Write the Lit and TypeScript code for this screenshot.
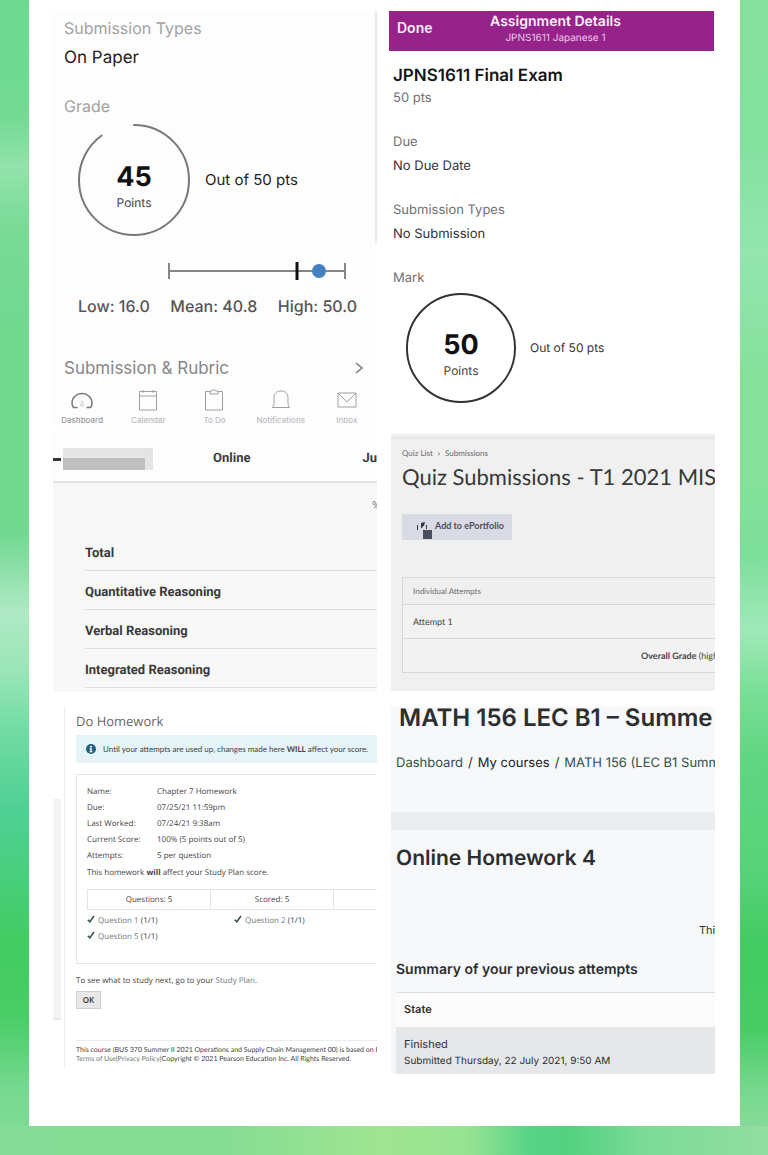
import { LitElement, html, css, svg } from "lit";
import { customElement, property } from "lit/decorators.js";

/** Circular score dial; the arc covers score / total of the circle. */
@customElement("score-ring")
class ScoreRing extends LitElement {
  @property({ type: Number }) score = 0;
  @property({ type: Number }) total = 50;

  static styles = css`
    :host { display: grid; color: #75797c; }
    .arc, .label { grid-area: 1 / 1; }
    .arc { width: 100%; height: 100%; display: block; }
    .label {
      display: flex; flex-direction: column; align-items: center; justify-content: center;
      padding-top: 16px; color: #111;
    }
    .score { font-size: 27px; line-height: 30px; font-weight: 700; }
    .unit { font-size: 12px; line-height: 22px; color: #444; }
  `;

  render() {
    const share = (this.score / this.total) * 100;
    return html`
      <svg class="arc" viewBox="0 0 114 114" aria-hidden="true">
        <circle cx="57" cy="57" r="55" fill="none" stroke="currentColor" stroke-width="2"
          stroke-linecap="round" pathLength="100"
          stroke-dasharray=${share >= 100 ? "none" : `${share} 100`} transform="rotate(-90 57 57)"></circle>
      </svg>
      <div class="label"><span class="score">${this.score}</span><span class="unit">Points</span></div>
    `;
  }
}

@customElement("grade-panel")
class GradePanel extends LitElement {
  static styles = css`
    :host { display: block; background: #fdfdfd; font-family: Inter, "Noto Sans", sans-serif; color: #222; }
    .details { border-right: 2px solid #ebebed; padding: 5px 0 6px 11px; }
    .term { margin: 0; font-size: 16px; line-height: 24px; font-weight: 400; color: #a2a2a4; }
    .value { margin: 2px 0 0; font-size: 17px; line-height: 32px; }
    .grade { margin-top: 20px; }
    .score-row { display: flex; align-items: center; gap: 14px; padding: 5px 0 0 13px; }
    .ring { width: 114px; height: 114px; }
    .outof { font-size: 15px; line-height: 20px; }
    .range { display: block; width: 180px; height: 18px; margin: 19px 30px 0 auto; }
    .stats {
      display: flex; justify-content: space-between; padding: 0 20px 0 25px; margin-top: 14px;
      font-size: 16px; line-height: 24px; font-weight: 500; color: #555;
    }
    .rubric {
      display: flex; justify-content: space-between; align-items: center; width: 100%;
      margin: 38px 0 0; padding: 0 13px 0 11px; border: 0; background: none;
      font: 400 17px/24px Inter, "Noto Sans", sans-serif; color: #87878a;
    }
    .chevron { width: 10px; height: 14px; }
    .tabs { display: grid; grid-template-columns: repeat(5, 1fr); margin: 8px -3px 0 -4px; }
    .tab {
      display: flex; flex-direction: column; align-items: center; gap: 2px;
      border: 0; padding: 0; background: none; white-space: nowrap;
      font: 500 8px/12px Inter, "Noto Sans", sans-serif; color: #bcbcbf;
    }
    .tab svg { width: 24px; height: 24px; color: #a0a0a3; }
    .tab.active { color: #98989b; }
    .tab.active svg { color: #77777a; }
  `;

  private tabs = [
    { name: "Dashboard", icon: svg`<path d="M7.500 19.500 H3.500 C2.300 17.800 2 16.500 2 15 C2 9.500 6.500 5.500 12 5.500 C17.500 5.500 22 9.500 22 15 C22 16.500 21.700 17.800 20.500 19.500 H16.500" stroke-width="1.500"/><path d="M10.500 18 L12 13 L13.500 18Z" stroke-width=".3"/>` },
    { name: "Calendar", icon: svg`<path d="M3.500 3.500 H20.500 V22 H3.500Z M3.500 8 H20.500 M7 2 V5 M17 2 V5"/>` },
    { name: "To Do", icon: svg`<path d="M8 3.500 H3.500 V22 H20.500 V3.500 H16 M8 3 H10 L12 1.500 L14 3 H16 V6 H8Z"/>` },
    { name: "Notifications", icon: svg`<path d="M3.500 19.500 C5.500 17 5 14 5 10 C5 5 8 3 12 3 C16 3 19 5 19 10 C19 14 18.500 17 20.500 19.500Z"/>` },
    { name: "Inbox", icon: svg`<path d="M3 5 H21 V19 H3Z M3 5 L12 14 L21 5"/>` },
  ];

  render() {
    return html`
      <div class="details">
        <h3 class="term">Submission Types</h3>
        <p class="value">On Paper</p>
        <h3 class="term grade">Grade</h3>
        <div class="score-row">
          <score-ring class="ring" .score=${45} .total=${50}></score-ring>
          <span class="outof">Out of 50 pts</span>
        </div>
      </div>
      <svg class="range" viewBox="0 0 180 18" role="img" aria-label="Score distribution">
        <path d="M2 9 H178 M2 1 V17 M178 1 V17" stroke="#868686" stroke-width="2" fill="none"/>
        <path d="M130 0 V18" stroke="#111" stroke-width="3"/>
        <circle cx="152" cy="9" r="7" fill="#4581c0"/>
      </svg>
      <div class="stats"><span>Low: 16.0</span><span>Mean: 40.8</span><span>High: 50.0</span></div>
      <button class="rubric">
        Submission &amp; Rubric
        <svg class="chevron" viewBox="0 0 10 14" fill="none" stroke="#77777a" stroke-width="1.500"><path d="M2 2 L8 7 L2 12"/></svg>
      </button>
      <nav class="tabs">
        ${this.tabs.map((t, i) => html`
          <button class="tab ${i === 0 ? "active" : ""}">
            <svg viewBox="0 0 24 24" fill="none" stroke="currentColor">${t.icon}</svg>${t.name}
          </button>`)}
      </nav>
    `;
  }
}

@customElement("exam-panel")
class ExamPanel extends LitElement {
  static styles = css`
    :host { display: block; font-family: Inter, "Noto Sans", sans-serif; color: #333; }
    .bar {
      display: grid; grid-template-columns: 1fr auto 1fr; align-items: center;
      height: 40px; padding-left: 8px; background: #96238a; color: #fbeefa;
    }
    .done {
      justify-self: start; border: 0; padding: 0 0 6px; background: none; color: inherit;
      font: 600 14px/20px Inter, "Noto Sans", sans-serif;
    }
    .title { margin: 0; text-align: center; font-size: 14px; line-height: 18px; font-weight: 600; }
    .sub { margin: 0 0 4px; text-align: center; font-size: 10px; line-height: 14px; color: #ecc9e8; }
    .body { padding: 13px 0 0 4px; }
    .name { margin: 0; font-size: 17px; line-height: 24px; font-weight: 600; color: #151515; }
    .text { margin: 0; font-size: 13px; line-height: 20px; font-weight: 400; }
    .muted { color: #707073; }
    .group { display: grid; gap: 4px; margin-top: 24px; }
    .mark-label { margin-top: 24px; }
    .mark { display: flex; align-items: center; gap: 13px; padding: 4px 0 0 12px; }
    .ring { width: 112px; height: 112px; color: #333; }
    .outof { font-size: 12px; line-height: 16px; }
  `;

  render() {
    return html`
      <header class="bar">
        <button class="done">Done</button>
        <div><h2 class="title">Assignment Details</h2><p class="sub">JPNS1611 Japanese 1</p></div>
      </header>
      <div class="body">
        <h3 class="name">JPNS1611 Final Exam</h3>
        <p class="text muted">50 pts</p>
        <div class="group"><h4 class="text muted">Due</h4><p class="text">No Due Date</p></div>
        <div class="group"><h4 class="text muted">Submission Types</h4><p class="text">No Submission</p></div>
        <h4 class="text muted mark-label">Mark</h4>
        <div class="mark">
          <score-ring class="ring" .score=${50} .total=${50}></score-ring>
          <span class="outof">Out of 50 pts</span>
        </div>
      </div>
    `;
  }
}

@customElement("reasoning-panel")
class ReasoningPanel extends LitElement {
  static styles = css`
    :host {
      display: block; overflow: hidden; background: #f8f8f8;
      font: 700 13px/18px Roboto, "Noto Sans", sans-serif; color: #3a3a3a;
    }
    .top {
      display: grid; grid-template-columns: 10px 150px 1fr auto; align-items: center;
      height: 50px; padding-top: 4px; box-sizing: border-box; background: #fdfdfd; border-bottom: 2px solid #e2e2e2;
    }
    .dash { width: 8px; height: 3px; background: #333; }
    .hidden-name {
      width: 90px; height: 22px; box-sizing: border-box; border-right: 8px solid #e4e4e4;
      background: linear-gradient(#e6e6e6 45%, #bfbfbf 45%);
    }
    .percent { margin: 0 -3px 0 0; padding: 14px 0 0; text-align: right; font-size: 11px; line-height: 18px; font-weight: 400; color: #777; }
    .list { margin: 0; padding: 17px 0 4px 32px; list-style: none; }
    .item { padding-top: 6px; line-height: 32px; border-bottom: 1px solid #dedede; }
  `;

  render() {
    return html`
      <div class="top">
        <span class="dash"></span><span class="hidden-name"></span><span>Online</span><span>Ju</span>
      </div>
      <p class="percent">%</p>
      <ul class="list">
        ${["Total", "Quantitative Reasoning", "Verbal Reasoning", "Integrated Reasoning"].map(
          (name) => html`<li class="item">${name}</li>`)}
      </ul>
    `;
  }
}

@customElement("quiz-panel")
class QuizPanel extends LitElement {
  static styles = css`
    :host {
      display: block; overflow: hidden; white-space: nowrap; box-sizing: border-box;
      padding: 6px 0 18px 11px; color: #444;
      background: linear-gradient(#fafafa, #e6e6e7 5px, #f0f0f1 7px, #f0f0f1);
      font: 400 9px/12px Lato, "Noto Sans", sans-serif;
    }
    .crumbs { display: flex; gap: 5px; padding-top: 8px; font-size: 8px; }
    .crumbs a { color: #6a6a6a; text-decoration: none; }
    .title { margin: 3px 0 0; font-size: 22px; line-height: 30px; font-weight: 400; color: #383838; }
    .add {
      display: flex; align-items: center; gap: 3px; width: 110px; height: 26px; margin: 22px 0 37px;
      padding: 0 0 3px 14px; border: 0; background: #d9dbe4; color: #4a4c60;
      font: 700 9px/12px Lato, "Noto Sans", sans-serif;
    }
    .add svg { width: 16px; height: 18px; margin-bottom: -8px; }
    .attempts { width: 100%; border-collapse: collapse; }
    .attempts th, .attempts td {
      padding: 0 0 0 10px; border: 1px solid #d6d7da; border-right: 0;
      text-align: left; font-weight: 400; background: #f2f2f3;
    }
    .attempts th { height: 26px; font-size: 8px; color: #6c6c6c; background: #efeff0; }
    .attempts td { height: 33px; }
    .attempts .overall { padding-left: 238px; }
  `;

  render() {
    return html`
      <nav class="crumbs"><a href="#quizzes">Quiz List</a><span>›</span><a href="#submissions">Submissions</a></nav>
      <h2 class="title">Quiz Submissions - T1 2021 MIS</h2>
      <button class="add">
        <svg viewBox="0 0 16 18" fill="#33354a" aria-hidden="true">
          <path d="M1 4h1v5H1z M5 2l4-1-1 4H7l-1 2H5z M10 4h1v4h-1z"/><path d="M7 9h9v9H7z" fill="#4b4d60"/>
        </svg>
        Add to ePortfolio
      </button>
      <table class="attempts">
        <thead><tr><th scope="col">Individual Attempts</th></tr></thead>
        <tbody>
          <tr><td>Attempt 1</td></tr>
          <tr><td class="overall"><b>Overall Grade</b> (high</td></tr>
        </tbody>
      </table>
    `;
  }
}

@customElement("homework-panel")
class HomeworkPanel extends LitElement {
  static styles = css`
    :host {
      display: grid; grid-template-columns: 8px 1fr; column-gap: 3px; overflow: hidden; white-space: nowrap;
      font: 400 8px/16px "Open Sans", "Noto Sans", sans-serif; color: #444;
    }
    .rail { margin: 92px 0 48px; background: #f4f4f4; border-bottom: 2px solid #ececec; }
    .page { min-width: 0; border-left: 1px solid #ededed; padding-left: 11px; }
    .title { margin: 4px 0; font-size: 13px; line-height: 20px; font-weight: 400; color: #666; }
    .notice {
      display: flex; align-items: center; gap: 7px; height: 28px; padding-left: 10px; background: #e6f3f7;
      font-family: Lato, "Noto Sans", sans-serif;
    }
    .notice svg { width: 10px; height: 10px; flex: none; }
    .card { margin-top: 11px; padding: 9px 0 18px 10px; border: 1px solid #e6e6e6; border-right: 0; }
    .facts { display: grid; grid-template-columns: 70px 1fr; margin: 0; }
    .facts dt, .facts dd { margin: 0; }
    .note { margin: 1px 0 8px; }
    .counts { width: 100%; table-layout: fixed; border-collapse: collapse; margin-bottom: 3px; }
    .counts th { height: 19px; padding: 0; border: 1px solid #e4e4e4; font-weight: 400; }
    .counts .rest { width: 43px; border-right: 0; }
    .questions { display: grid; grid-template-columns: 147px 1fr; margin: 0; padding: 0; list-style: none; }
    .questions svg { width: 8px; height: 8px; margin-right: 3px; }
    a { color: #6f7b7d; text-decoration: none; }
    .next { margin: 9px 0 2px; }
    .ok {
      width: 25px; height: 18px; padding: 0; border: 1px solid #d0d0d0; background: #e8e8e8;
      color: #333; font: 600 8px/12px "Open Sans", "Noto Sans", sans-serif; display: block;
    }
    .foot {
      margin: 31px 0 0; padding: 5px 0 4px; border-top: 1px solid #ececec;
      font-size: 7px; line-height: 9px; font-family: Lato, "Noto Sans", sans-serif;
    }
  `;

  private facts = [
    ["Name:", "Chapter 7 Homework"],
    ["Due:", "07/25/21 11:59pm"],
    ["Last Worked:", "07/24/21 9:38am"],
    ["Current Score:", "100% (5 points out of 5)"],
    ["Attempts:", "5 per question"],
  ];

  render() {
    return html`
      <div class="rail"></div>
      <div class="page">
        <h2 class="title">Do Homework</h2>
        <div class="notice">
          <svg viewBox="0 0 10 10" aria-hidden="true">
            <circle cx="5" cy="5" r="5" fill="#245f7d"/><path d="M4 2h2v1.500H4z M3.500 4.300h2.300v3h.7v1h-3v-1h.8V5.200h-.8z" fill="#fff"/>
          </svg>
          <span>Until your attempts are used up, changes made here <b>WILL</b> affect your score.</span>
        </div>
        <div class="card">
          <dl class="facts">${this.facts.map(([k, v]) => html`<dt>${k}</dt><dd>${v}</dd>`)}</dl>
          <p class="note">This homework <b>will</b> affect your Study Plan score.</p>
          <table class="counts"><tr><th scope="col">Questions: 5</th><th scope="col">Scored: 5</th><th class="rest"></th></tr></table>
          <ul class="questions">
            ${[1, 2, 5].map((n) => html`
              <li><svg viewBox="0 0 8 8" fill="none" stroke="#3e5350" stroke-width="1.600" aria-hidden="true"><path d="M.8 4.800 L2.800 6.800 L7 1"/></svg><a href="#question-${n}">Question ${n}</a> (1/1)</li>`)}
          </ul>
        </div>
        <p class="next">To see what to study next, go to your <a href="#plan">Study Plan</a>.</p>
        <button class="ok">OK</button>
        <footer class="foot">
          This course (BUS 370 Summer II 2021 Operations and Supply Chain Management 00) is based on B<br />
          <a href="#terms">Terms of Use</a>|<a href="#privacy">Privacy Policy</a>|Copyright © 2021 Pearson Education Inc. All Rights Reserved.
        </footer>
      </div>
    `;
  }
}

@customElement("course-panel")
class CoursePanel extends LitElement {
  static styles = css`
    :host {
      display: block; overflow: hidden; white-space: nowrap; background: #f6f8f9;
      font: 400 11px/16px Inter, "Noto Sans", sans-serif; color: #2c2e30;
    }
    .head { padding: 0 0 39px 5px; border-bottom: 18px solid #ebeced; }
    .course { margin: 0 0 24px 3px; font-size: 24px; line-height: 22px; font-weight: 600; }
    .crumbs { display: flex; gap: 5px; font-size: 13px; line-height: 20px; }
    .crumbs a { color: #31504c; text-decoration: none; }
    .crumbs .here { color: #222; }
    .body { padding: 14px 0 0 5px; background: #f7f8fa; }
    .name { margin: 0; font-size: 21px; line-height: 30px; font-weight: 600; }
    .allowed { margin: 48px 0 21px; padding-left: 303px; }
    .summary { margin: 0 0 11px; font-size: 14px; line-height: 22px; font-weight: 600; }
    .attempts { width: 100%; border-collapse: collapse; }
    .attempts th, .attempts td { text-align: left; padding: 0 8px; }
    .attempts th { height: 34px; padding-bottom: 2px; box-sizing: border-box; border-top: 1px solid #dcdee0; background: #fbfbfc; font-weight: 600; }
    .attempts td { height: 47px; padding-top: 4px; box-sizing: border-box; background: #e6e7e9; }
    .when { font-size: 10px; }
  `;

  render() {
    return html`
      <header class="head">
        <h1 class="course">MATH 156 LEC B1 – Summe</h1>
        <nav class="crumbs">
          <a href="#dashboard">Dashboard</a><span>/</span><a class="here" href="#courses">My courses</a><span>/</span><a href="#math">MATH 156 (LEC B1 Summ</a>
        </nav>
      </header>
      <div class="body">
        <h2 class="name">Online Homework 4</h2>
        <p class="allowed">Thi</p>
        <h3 class="summary">Summary of your previous attempts</h3>
        <table class="attempts">
          <thead><tr><th scope="col">State</th></tr></thead>
          <tbody><tr><td>Finished<br /><span class="when">Submitted Thursday, 22 July 2021, 9:50 AM</span></td></tr></tbody>
        </table>
      </div>
    `;
  }
}

@customElement("app-root")
class AppRoot extends LitElement {
  static styles = css`
    :host {
      display: block; padding: 0 28px 30px 29px; box-sizing: border-box;
      text-rendering: geometricPrecision;
      background:
        linear-gradient(90deg, #84dc96, #86dd93 30%, #a0e591 50%, #96e392 61%, #58d386 69%, #52d17f 74%, #7cdb98 84%, #92dda2) bottom / 100% 30px no-repeat,
        linear-gradient(#6dd98f, #72da93 10%, #92e2aa 14.5%, #78da95 20%, #70d88f 30%, #70d88f 46%, #aee9c4 53%, #9be5ba 58%, #72dca3 63%, #50d095 70%, #48cf7c 76%, #42cb60 82%, #4acd67 88%, #74d98e 94%, #86dc97) left / 50% 100% no-repeat,
        linear-gradient(#86e19d, #84e1a0 13%, #94e5b0 22%, #86e19c 32%, #84e19b 42%, #7cde9b 48%, #a0e9b8 54.5%, #78df96 60%, #60d582 66%, #58d37a 75%, #42cb62 82%, #48cc65 89%, #74d78c 94%, #93dda3) right / 50% 100% no-repeat;
    }
    .sheet {
      display: grid; grid-template-columns: minmax(0, 1fr) minmax(0, 1fr); gap: 7px 14px; align-items: start;
      padding: 11px 25px 52px 24px; background: #fff;
    }
    .exam { margin: 0 1px 0 -2px; }
    .late { margin-top: 8px; }
  `;

  render() {
    return html`
      <main class="sheet">
        <grade-panel></grade-panel>
        <exam-panel class="exam"></exam-panel>
        <reasoning-panel></reasoning-panel>
        <quiz-panel></quiz-panel>
        <homework-panel class="late"></homework-panel>
        <course-panel class="late"></course-panel>
      </main>
    `;
  }
}
